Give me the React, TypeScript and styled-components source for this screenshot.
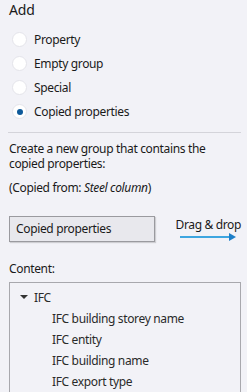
import { Fragment } from 'react'
import styled, { createGlobalStyle } from 'styled-components'

const GlobalStyle = createGlobalStyle`
	html, body {
		margin: 0;
		padding: 0;
		background: #f2f2f7;
	}
	body {
		font-family: "Noto Sans", "Open Sans", sans-serif;
		letter-spacing: -0.35px;
		color: #1a1a1a;
	}
`

const Panel = styled.section`
	width: 247px;
	height: 392px;
	overflow: hidden;
	box-sizing: border-box;
	padding: 0 6px 0 9px;
	background: #f2f2f7;
`

const Title = styled.h2`
	margin: 0;
	padding-top: 1px;
	font-size: 14px;
	font-weight: 400;
	line-height: 18px;
	letter-spacing: -0.2px;
`

const RadioList = styled.div`
	display: flex;
	flex-direction: column;
	gap: 5px;
	margin: 11px 0 0 3px;
`

const RadioRow = styled.label`
	display: flex;
	align-items: center;
	gap: 7px;
	height: 19px;
	font-size: 12px;
`

const RadioDot = styled.span<{ checked?: boolean }>`
	width: 15px;
	height: 15px;
	box-sizing: border-box;
	border-radius: 50%;
	background: #fff;
	border: 1px solid #e4e4ea;
	display: flex;
	align-items: center;
	justify-content: center;
	&::after {
		content: '';
		width: 6px;
		height: 6px;
		border-radius: 50%;
		background: ${props => props.checked ? '#0e5a9a' : 'transparent'};
	}
`

const Divider = styled.hr`
	border: none;
	border-top: 1px solid #d4d4da;
	margin: 11px 0 0 -1px;
`

const Text = styled.p<{ gapTop: number }>`
	margin: ${props => props.gapTop}px 0 0;
	font-size: 12px;
	line-height: 14.5px;
`

const DragRow = styled.div`
	display: flex;
	align-items: flex-start;
	justify-content: space-between;
	margin-top: 20px;
`

const CopyButton = styled.div`
	width: 146px;
	height: 26px;
	box-sizing: border-box;
	display: flex;
	align-items: center;
	padding-left: 6px;
	font-size: 12px;
	background: #e8e8ed;
	border: 1px solid #9a9a9f;
	box-shadow: 1px 1px 1px rgba(0, 0, 0, 0.15);
`

const DragHint = styled.div`
	display: flex;
	flex-direction: column;
	align-items: flex-end;
	margin-top: 1px;
	font-size: 12px;
	line-height: 16px;
	svg {
		margin-right: 5px;
	}
`

const Label = styled.div`
	margin-top: 20px;
	font-size: 12px;
	line-height: 14px;
`

const TreeBox = styled.div`
	margin-top: 6px;
	border: 1px solid #a8a8ad;
	border-bottom: none;
	height: 200px;
	padding: 4px 0 0 10px;
`

const TreeRow = styled.div<{ indent: number }>`
	display: flex;
	align-items: center;
	height: 21px;
	padding-left: ${props => props.indent}px;
	font-size: 12px;
	color: #2a2a2a;
	gap: 6px;
`

const Caret = styled.span`
	width: 0;
	height: 0;
	border-left: 4px solid transparent;
	border-right: 4px solid transparent;
	border-top: 4px solid #333;
`

const options = ['Property', 'Empty group', 'Special', 'Copied properties']
const children = ['IFC building storey name', 'IFC entity', 'IFC building name', 'IFC export type']

const App = () => {
	return (
		<Fragment>
			<GlobalStyle />
			<Panel>
				<Title>Add</Title>
				<RadioList>
					{options.map(o => (
						<RadioRow key={o}>
							<RadioDot checked={o === 'Copied properties'} />
							{o}
						</RadioRow>
					))}
				</RadioList>
				<Divider />
				<Text gapTop={9}>Create a new group that contains the copied properties:</Text>
				<Text gapTop={10}>(Copied from: <i>Steel column</i>)</Text>
				<DragRow>
					<CopyButton>Copied properties</CopyButton>
					<DragHint>
						Drag &amp; drop
						<svg width="56" height="8" viewBox="0 0 56 8">
							<line x1="0" y1="4" x2="50" y2="4" stroke="#3ea6e0" strokeWidth="2" />
							<polygon points="49,0 56,4 49,8" fill="#1e7fc8" />
						</svg>
					</DragHint>
				</DragRow>
				<Label>Content:</Label>
				<TreeBox>
					<TreeRow indent={0}><Caret />IFC</TreeRow>
					{children.map(c => (
						<TreeRow key={c} indent={32}>{c}</TreeRow>
					))}
				</TreeBox>
			</Panel>
		</Fragment>
	)
}

export default App
